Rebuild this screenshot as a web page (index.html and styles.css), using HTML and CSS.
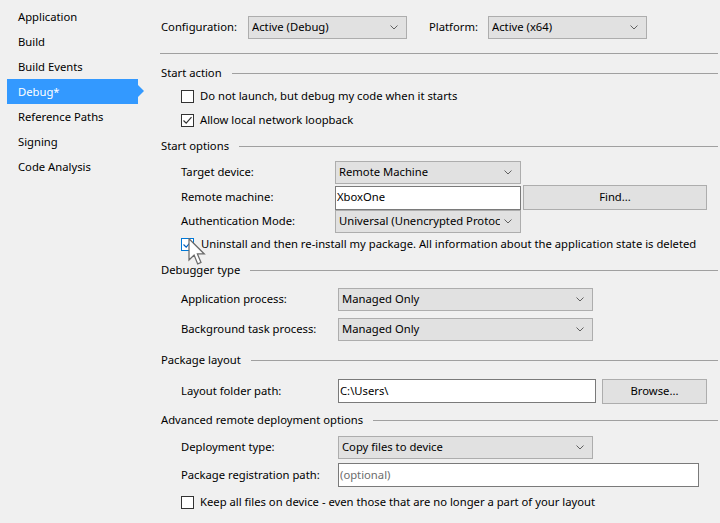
FILE: index.html
```html
<!DOCTYPE html>
<html>
<head>
<meta charset="utf-8">
<link rel="stylesheet" href="styles.css">
</head>
<body>
<div class="window">
  <nav class="sidebar">
    <div class="tab">Application</div>
    <div class="tab">Build</div>
    <div class="tab">Build Events</div>
    <div class="tab active">Debug*</div>
    <div class="tab">Reference Paths</div>
    <div class="tab">Signing</div>
    <div class="tab">Code Analysis</div>
  </nav>
  <main class="page">
    <div class="toprow">
      <span class="lbl-config">Configuration:</span>
      <div class="combo w-top"><span class="val">Active (Debug)</span><svg class="chev" width="8" height="5" viewBox="0 0 8 5"><polyline points="0.5,0.5 4,4 7.5,0.5"/></svg></div>
      <span class="lbl-platform">Platform:</span>
      <div class="combo w-top"><span class="val">Active (x64)</span><svg class="chev" width="8" height="5" viewBox="0 0 8 5"><polyline points="0.5,0.5 4,4 7.5,0.5"/></svg></div>
    </div>
    <div class="separator"></div>

    <div class="section-head h24">Start action</div>
    <div class="row h23"><label class="check"><span class="box"></span>Do not launch, but debug my code when it starts</label></div>
    <div class="row h25"><label class="check"><span class="box"><svg width="11" height="11" viewBox="0 0 11 11"><polyline points="1.5,5.5 4.2,8.2 9.5,2.2"/></svg></span>Allow local network loopback</label></div>

    <div class="section-head h26">Start options</div>
    <div class="row h26"><span class="lbl lbl-a">Target device:</span><div class="combo w-a"><span class="val">Remote Machine</span><svg class="chev" width="8" height="5" viewBox="0 0 8 5"><polyline points="0.5,0.5 4,4 7.5,0.5"/></svg></div></div>
    <div class="row h25"><span class="lbl lbl-a">Remote machine:</span><div class="input w-a"><span class="val">XboxOne</span></div><div class="button w-find"><span class="val">Find...</span></div></div>
    <div class="row h23"><span class="lbl lbl-a">Authentication Mode:</span><div class="combo w-a"><span class="val">Universal (Unencrypted Protoc</span><svg class="chev" width="8" height="5" viewBox="0 0 8 5"><polyline points="0.5,0.5 4,4 7.5,0.5"/></svg></div></div>
    <div class="row h23 cursor-row"><label class="check hover"><span class="box"><svg width="11" height="11" viewBox="0 0 11 11"><polyline points="1.5,5.5 4.2,8.2 9.5,2.2"/></svg></span>Uninstall and then re-install my package. All information about the application state is deleted</label>
      <svg class="cursor" width="18" height="27" viewBox="0 0 12.6 19.6"><path d="M0.5,0.5 L0.5,16 L4.2,12.4 L6.8,18.8 L9.2,17.8 L6.6,11.6 L11.6,11.6 Z"/></svg>
    </div>

    <div class="section-head h28">Debugger type</div>
    <div class="row h30"><span class="lbl lbl-b">Application process:</span><div class="combo w-b"><span class="val">Managed Only</span><svg class="chev" width="8" height="5" viewBox="0 0 8 5"><polyline points="0.5,0.5 4,4 7.5,0.5"/></svg></div></div>
    <div class="row h31"><span class="lbl lbl-b">Background task process:</span><div class="combo w-b"><span class="val">Managed Only</span><svg class="chev" width="8" height="5" viewBox="0 0 8 5"><polyline points="0.5,0.5 4,4 7.5,0.5"/></svg></div></div>

    <div class="section-head h31">Package layout</div>
    <div class="row h30"><span class="lbl lbl-b">Layout folder path:</span><div class="input w-path"><span class="val">C:\Users\</span></div><div class="button w-browse"><span class="val">Browse...</span></div></div>

    <div class="section-head h28">Advanced remote deployment options</div>
    <div class="row h27"><span class="lbl lbl-b">Deployment type:</span><div class="combo w-b"><span class="val">Copy files to device</span><svg class="chev" width="8" height="5" viewBox="0 0 8 5"><polyline points="0.5,0.5 4,4 7.5,0.5"/></svg></div></div>
    <div class="row h28"><span class="lbl lbl-b">Package registration path:</span><div class="input w-reg placeholder"><span class="val">(optional)</span></div></div>
    <div class="row h26"><label class="check"><span class="box"></span>Keep all files on device - even those that are no longer a part of your layout</label></div>
  </main>
</div>
</body>
</html>
```

FILE: styles.css
```css
* { box-sizing: border-box; }
html, body {
  margin: 0;
  padding: 0;
  background: #f0f0f0;
}
body {
  font-family: "Noto Sans", "Open Sans", sans-serif;
  font-size: 11.25px;
  color: #000;
  width: 720px;
  height: 523px;
  overflow: hidden;
}
.window {
  display: flex;
  height: 523px;
}
.sidebar {
  width: 160px;
  flex: none;
  padding-top: 4px;
}
.tab {
  height: 25px;
  line-height: 25px;
  padding-left: 18px;
  white-space: nowrap;
}
.tab.active {
  position: relative;
  margin-left: 7px;
  width: 131px;
  padding-left: 11px;
  background: #3399ff;
  color: #fff;
}
.tab.active::after {
  content: "";
  position: absolute;
  left: 131px;
  top: 6px;
  border-left: 6px solid #3399ff;
  border-top: 6px solid transparent;
  border-bottom: 6px solid transparent;
}
.page {
  flex: 1;
  padding-left: 1px;
  padding-right: 2px;
}
.toprow {
  display: flex;
  align-items: center;
  margin-top: 16px;
  height: 23px;
}
.lbl-config { width: 87px; padding-bottom: 2px; }
.lbl-platform { width: 59px; margin-left: 22px; padding-bottom: 2px; }
.w-top { width: 159px; }
.separator {
  margin-top: 14px;
  height: 1px;
  background: #a0a0a0;
  margin-left: -1px;
  margin-bottom: 7px;
}
.section-head {
  display: flex;
  align-items: center;
  gap: 10px;
  white-space: nowrap;
  padding-bottom: 2px;
}
.section-head::after {
  content: "";
  flex: 1;
  height: 1px;
  background: #a0a0a0;
  margin-top: 2px;
}
.row {
  display: flex;
  align-items: center;
  padding-left: 20px;
  white-space: nowrap;
}
.h23 { height: 23px; }
.h24 { height: 24px; }
.h25 { height: 25px; }
.h26 { height: 26px; }
.h27 { height: 27px; }
.h28 { height: 28px; }
.h30 { height: 30px; }
.h31 { height: 31px; }
.lbl { flex: none; padding-bottom: 2px; }
.lbl-a { width: 154px; }
.lbl-b { width: 157px; }

.combo {
  flex: none;
  height: 23px;
  background: #e1e1e1;
  border: 1px solid #adadad;
  display: flex;
  align-items: center;
  padding-left: 3px;
  padding-right: 8px;
  overflow: hidden;
}
.val {
  flex: 1;
  overflow: hidden;
  white-space: nowrap;
  padding-bottom: 2px;
}
.chev {
  flex: none;
  margin-left: 4px;
}
.chev polyline {
  fill: none;
  stroke: #606060;
  stroke-width: 1;
}
.input {
  flex: none;
  height: 24px;
  background: #fff;
  border: 1px solid #7a7a7a;
  display: flex;
  align-items: center;
  padding-left: 1px;
}
.placeholder { color: #6d6d6d; }
.button {
  flex: none;
  height: 25px;
  background: #e1e1e1;
  border: 1px solid #adadad;
  display: flex;
  align-items: center;
  justify-content: center;
  text-align: center;
}
.w-a { width: 186px; }
.w-find { width: 184px; margin-left: 2px; }
.w-b { width: 255px; }
.w-path { width: 258px; }
.w-browse { width: 105px; margin-left: 6px; }
.w-reg { width: 361px; }

.check {
  display: flex;
  align-items: center;
  padding-bottom: 2px;
}
.box {
  width: 13px;
  height: 13px;
  border: 1px solid #333;
  background: #fff;
  margin-right: 6px;
  margin-top: 2px;
  display: flex;
  align-items: center;
  justify-content: center;
  flex: none;
}
.box polyline {
  fill: none;
  stroke: #333;
  stroke-width: 1.2;
}
.check.hover .box {
  border-color: #0078d7;
  margin-right: 7px;
}
.check.hover .box polyline { stroke: #0060c0; }
.cursor-row { position: relative; }
.cursor {
  position: absolute;
  left: 27px;
  top: 5px;
}
.cursor path {
  fill: #fff;
  stroke: #6a6a6a;
  stroke-width: 0.9;
  stroke-linejoin: miter;
}
```
